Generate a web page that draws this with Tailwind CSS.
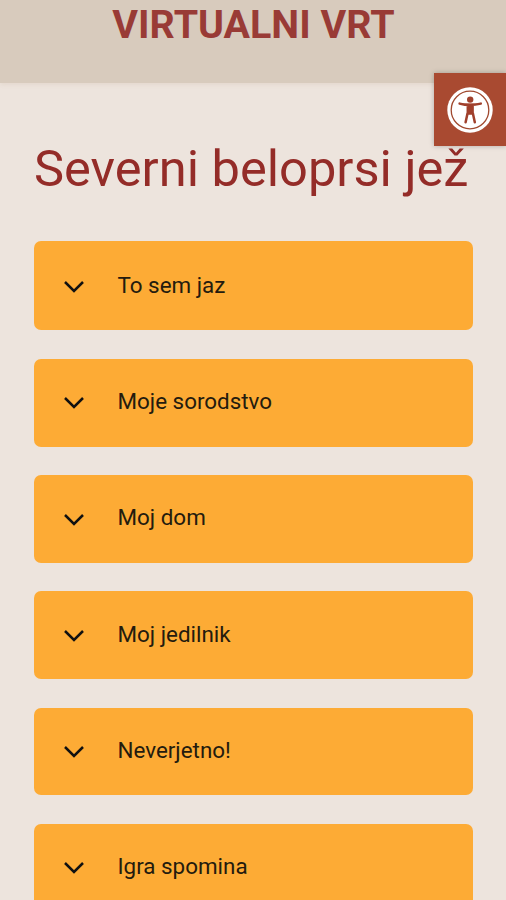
<!DOCTYPE html>
<html lang="sl"><head><meta charset="utf-8"><title>Virtualni vrt</title>
<script src="https://cdn.jsdelivr.net/npm/@tailwindcss/browser@4"></script></head>
<body class="h-[900px] overflow-hidden bg-[#ede4dd] font-['Roboto',sans-serif] relative">
<header class="h-[82.5px] pt-[1.5px] pl-px bg-[#d8cbbd] shadow-[0_1px_5px_rgba(150,110,60,0.12)] flex justify-center"><span class="text-[39.4px] leading-[46px] font-bold text-[#993b36] whitespace-nowrap">VIRTUALNI VRT</span></header>
<button aria-label="Dostopnost" class="absolute right-0 top-[73px] w-[72.5px] h-[73px] bg-[#a94a31] shadow-[0_0_5px_rgba(0,0,0,0.25)] flex items-center justify-center"><svg class="w-[46px] h-[46px]" viewBox="0 0 46 46"><circle cx="23" cy="23" r="22.7" fill="#fff"/><circle cx="23" cy="23" r="18.8" fill="none" stroke="#a0492f" stroke-width="1.3"/><circle cx="23.2" cy="12.6" r="3.2" fill="#a0402c"/><path d="M12.6 16.6Q23 19.5 33.8 16.6M20.8 18.5h4.8v8h-4.8zM20.6 26l-2 9.2M25.8 26l2 9.2" fill="#a0402c" stroke="#a0402c" stroke-width="2.5" stroke-linecap="round" stroke-linejoin="round"/></svg></button>
<main class="px-[34px]">
<h1 class="pt-[56.9px] h-[158.5px] text-[50.6px] leading-[60px] text-[#942c28] whitespace-nowrap">Severni beloprsi jež</h1>
<div class="w-[439px] flex flex-col gap-[28.6px] text-[22.4px] leading-[30px] text-[#241b0e]">
<button class="h-[89.4px] shrink-0 rounded-[7px] bg-[#fdab35] flex items-start pt-[28.7px] pl-[30px] gap-[33.5px]"><svg class="w-5 h-5 mt-[6px]" viewBox="0 0 20 20" fill="none" stroke="#111" stroke-width="2.5"><path d="M1 6l9 9 9-9"/></svg><span>To sem jaz</span></button>
<button class="h-[87.6px] shrink-0 rounded-[7px] bg-[#fdab35] flex items-start pt-[27px] pl-[30px] gap-[33.5px]"><svg class="w-5 h-5 mt-[6.5px]" viewBox="0 0 20 20" fill="none" stroke="#111" stroke-width="2.5"><path d="M1 6l9 9 9-9"/></svg><span>Moje sorodstvo</span></button>
<button class="h-[87.6px] shrink-0 rounded-[7px] bg-[#fdab35] flex items-start pt-[27px] pl-[30px] gap-[33.5px]"><svg class="w-5 h-5 mt-[6.5px]" viewBox="0 0 20 20" fill="none" stroke="#111" stroke-width="2.5"><path d="M1 6l9 9 9-9"/></svg><span>Moj dom</span></button>
<button class="h-[87.6px] shrink-0 rounded-[7px] bg-[#fdab35] flex items-start pt-[27.3px] pl-[30px] gap-[33.5px]"><svg class="w-5 h-5 mt-[6.5px]" viewBox="0 0 20 20" fill="none" stroke="#111" stroke-width="2.5"><path d="M1 6l9 9 9-9"/></svg><span>Moj jedilnik</span></button>
<button class="h-[87.6px] shrink-0 rounded-[7px] bg-[#fdab35] flex items-start pt-[27px] pl-[30px] gap-[33.5px]"><svg class="w-5 h-5 mt-[6px]" viewBox="0 0 20 20" fill="none" stroke="#111" stroke-width="2.5"><path d="M1 6l9 9 9-9"/></svg><span>Neverjetno!</span></button>
<button class="h-[87.6px] shrink-0 rounded-[7px] bg-[#fdab35] flex items-start pt-[27px] pl-[30px] gap-[33.5px]"><svg class="w-5 h-5 mt-[6px]" viewBox="0 0 20 20" fill="none" stroke="#111" stroke-width="2.5"><path d="M1 6l9 9 9-9"/></svg><span>Igra spomina</span></button>
</div></main></body></html>
